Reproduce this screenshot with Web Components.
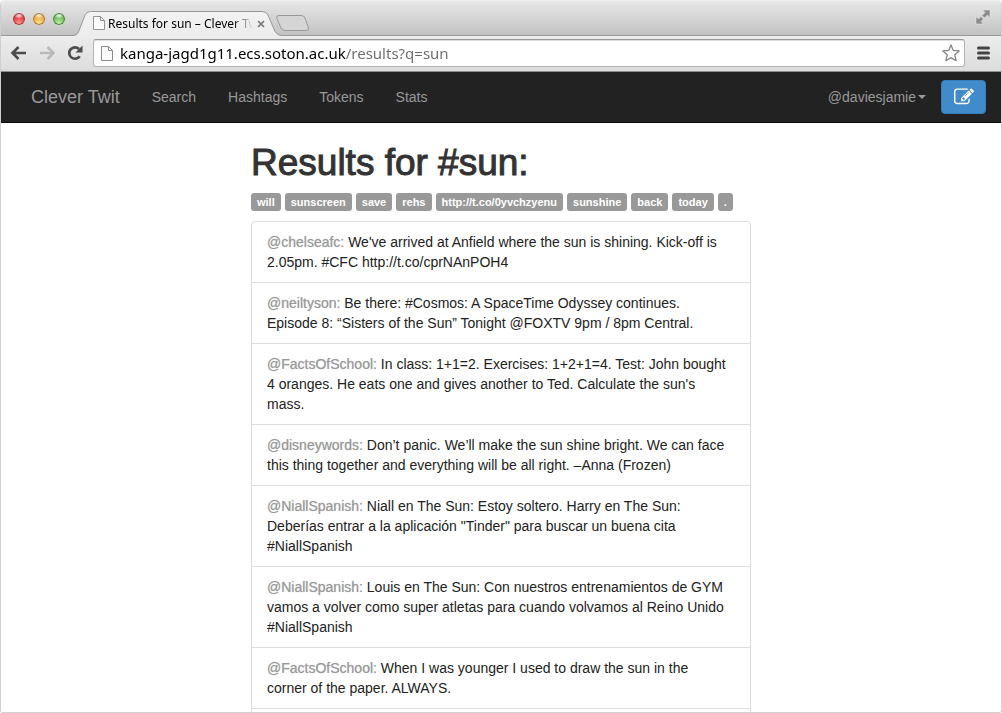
<!DOCTYPE html>
<html lang="en">
<head>
<meta charset="utf-8">
<title>Results for sun – Clever Twit</title>
<style>
  html, body { margin: 0; height: 100%; background: #fff; }
  body { font-family: "Liberation Sans", Arial, sans-serif; font-size: 14px; line-height: 20px; color: #333; }
</style>
</head>
<body>
<browser-window>
  <tab-strip slot="chrome">Results for sun – Clever Twit</tab-strip>
  <tool-bar slot="chrome" url="kanga-jagd1g11.ecs.soton.ac.uk/results?q=sun"></tool-bar>
  <nav-bar brand="Clever Twit" user="@daviesjamie">
    <nav-item>Search</nav-item>
    <nav-item>Hashtags</nav-item>
    <nav-item>Tokens</nav-item>
    <nav-item>Stats</nav-item>
  </nav-bar>
  <results-page>
    <span slot="title">Results for #sun:</span>
    <tag-label slot="tags">will</tag-label>
    <tag-label slot="tags">sunscreen</tag-label>
    <tag-label slot="tags">save</tag-label>
    <tag-label slot="tags">rehs</tag-label>
    <tag-label slot="tags">http://t.co/0yvchzyenu</tag-label>
    <tag-label slot="tags">sunshine</tag-label>
    <tag-label slot="tags">back</tag-label>
    <tag-label slot="tags">today</tag-label>
    <tag-label slot="tags">.</tag-label>
    <tweet-item><a href="#">@chelseafc:</a> We've arrived at Anfield where the sun is shining. Kick-off is 2.05pm. #CFC http://t.co/cprNAnPOH4</tweet-item>
    <tweet-item><a href="#">@neiltyson:</a> Be there: #Cosmos: A SpaceTime Odyssey continues. Episode 8: “Sisters of the Sun” Tonight @FOXTV 9pm / 8pm Central.</tweet-item>
    <tweet-item><a href="#">@FactsOfSchool:</a> In class: 1+1=2. Exercises: 1+2+1=4. Test: John bought 4 oranges. He eats one and gives another to Ted. Calculate the sun's mass.</tweet-item>
    <tweet-item><a href="#">@disneywords:</a> Don’t panic. We’ll make the sun shine bright. We can face this thing together and everything will be all right. –Anna (Frozen)</tweet-item>
    <tweet-item><a href="#">@NiallSpanish:</a> Niall en The Sun: Estoy soltero. Harry en The Sun: Deberías entrar a la aplicación "Tinder" para buscar un buena cita #NiallSpanish</tweet-item>
    <tweet-item><a href="#">@NiallSpanish:</a> Louis en The Sun: Con nuestros entrenamientos de GYM vamos a volver como super atletas para cuando volvamos al Reino Unido #NiallSpanish</tweet-item>
    <tweet-item><a href="#">@FactsOfSchool:</a> When I was younger I used to draw the sun in the corner of the paper. ALWAYS.</tweet-item>
    <tweet-item></tweet-item>
  </results-page>
</browser-window>

<script>
const define = (name, html, setup) => {
  const template = document.createElement('template');
  template.innerHTML = html;
  customElements.define(name, class extends HTMLElement {
    constructor() {
      super();
      this.attachShadow({ mode: 'open' }).append(template.content.cloneNode(true));
    }
    connectedCallback() { if (setup) setup(this, this.shadowRoot); }
  });
};

define('browser-window', `
  <style>
    :host { display: flex; flex-direction: column; box-sizing: border-box; height: 100vh; overflow: hidden;
      border: 1px solid #d0d0d0; border-top: 0; border-radius: 5px 5px 3px 3px; }
    header { flex: none; }
    main { flex: 1; min-height: 0; overflow: hidden; background: #fff; }
  </style>
  <header><slot name="chrome"></slot></header>
  <main><slot></slot></main>`);

define('tab-strip', `
  <style>
    :host { display: flex; box-sizing: border-box; height: 36px; padding: 0 10px 0 12px;
      background: linear-gradient(#f4f4f4 0, #e6e6e6 2px, #c2c2c2 35px); border-bottom: 1px solid #999;
      font-family: "Noto Sans", sans-serif; font-size: 12px; line-height: 24px; color: #000; }
    button { border: 0; padding: 0; background: none; display: block; }
    .lights { display: flex; gap: 8px; padding-top: 13px; }
    .lights button { width: 12px; height: 12px; border-radius: 50%; }
    .red { background: radial-gradient(ellipse 5px 3px at 50% 22%, #fff0f0, transparent), radial-gradient(circle at 50% 90%, #ff9c9c, #e03a40 60%); box-shadow: inset 0 0 0 1px #a8373a; }
    .amber { background: radial-gradient(ellipse 5px 3px at 50% 22%, #fffbe8, transparent), radial-gradient(circle at 50% 90%, #ffe890, #eda53c 60%); box-shadow: inset 0 0 0 1px #a87230; }
    .green { background: radial-gradient(ellipse 5px 3px at 50% 22%, #f4fff0, transparent), radial-gradient(circle at 50% 90%, #c8f4a4, #6ab958 60%); box-shadow: inset 0 0 0 1px #47803c; }
    .tab { position: relative; display: flex; align-items: center; box-sizing: border-box; width: 210px; height: 25px;
      margin: 11px 0 0 8px; padding: 0 18px 0 20px; }
    .shape { position: absolute; left: 0; top: 0; }
    .page { position: relative; flex: none; margin-right: 3px; }
    .title { position: relative; flex: 1; overflow: hidden; white-space: nowrap;
      -webkit-mask-image: linear-gradient(90deg, #000 86%, transparent); mask-image: linear-gradient(90deg, #000 86%, transparent); }
    .close { position: relative; flex: none; margin-left: 4px; }
    .new { height: 17px; margin: 15px auto 0 -7px; z-index: 1; }
    .full { margin-top: 9px; height: 16px; }
    svg { display: block; }
  </style>
  <div class="lights">
    <button class="red" aria-label="Close window"></button>
    <button class="amber" aria-label="Minimise window"></button>
    <button class="green" aria-label="Zoom window"></button>
  </div>
  <div class="tab">
    <svg class="shape" width="210" height="25" viewBox="0 0 210 25">
      <defs><linearGradient id="g" x2="0" y2="1"><stop stop-color="#f3f3f3"/><stop offset="1" stop-color="#ececec"/></linearGradient></defs>
      <path d="M0 25V24.500Q4 24.500 5.500 21L12 4Q13.500.5 17.500.5H189Q193.500.5 195 4L202 20.500Q204 24.500 209 24.500V25Z" fill="url(#g)"/>
      <path d="M0 24.500Q4 24.500 5.500 21L12 4Q13.500.5 17.500.5H189Q193.500.5 195 4L202 20.500Q204 24.500 209 24.500" fill="none" stroke="#979797"/>
    </svg>
    <svg class="page" width="12" height="15"><path d="M.5.5H7.500L11.500 4.500V13.500H.5ZM7.500.5V4.500H11.500" fill="#fbfbfb" stroke="#959595"/></svg>
    <span class="title"><slot></slot></span>
    <button class="close" aria-label="Close tab"><svg width="8" height="8"><path d="M1 1L7 7M7 1L1 7" stroke="#757575" stroke-width="1.700"/></svg></button>
  </div>
  <button class="new" aria-label="New tab"><svg width="34" height="17"><path d="M3 .5H25Q28 .5 29 3L32.500 13Q33 15.500 30 15.500H9Q6 15.500 5 13L.8 3Q0 .5 3 .5Z" fill="#d5d5d5" stroke="#989898"/></svg></button>
  <button class="full" aria-label="Full screen"><svg width="16" height="16"><path d="M7.500 1H15V8.500L12.500 6L9.500 9L7 6.500L10 3.500ZM1 7.500L3.500 10L6 7.500L8.500 10L6 12.500L8.500 15H1Z" fill="#8b8b8b" stroke="#e8e8e8" stroke-width=".6"/></svg></button>`);

define('tool-bar', `
  <style>
    :host { display: flex; align-items: center; box-sizing: border-box; height: 36px; padding: 0 11px 1px 9px;
      background: linear-gradient(#ededed, #dcdcdc); border-bottom: 1px solid #8d9090; }
    button { border: 0; padding: 0; background: none; display: block; }
    svg { display: block; }
    .back { margin-right: 12px; }
    .next { margin-right: 11px; }
    .reload { margin-right: 10px; }
    .bar { flex: 1; display: flex; align-items: center; box-sizing: border-box; height: 28px; padding: 0 4px 0 7px;
      background: #fff; border: 1px solid #b4b4b4; border-top-color: #989898; border-radius: 3px; box-shadow: inset 0 1px 1px #ddd; }
    input { flex: 1; min-width: 0; margin: 0 0 0 7px; padding: 0; border: 0; outline: 0; height: 24px;
      font: 15px/24px "Noto Sans", sans-serif; color: #000; -webkit-text-fill-color: transparent;
      background: linear-gradient(90deg, #000 var(--host-width), #6b6b6b var(--host-width)); -webkit-background-clip: text; background-clip: text; }
    .menu { margin-left: 12px; }
  </style>
  <button class="back" aria-label="Back"><svg width="17" height="16"><path d="M8.500 2L2.500 8L8.500 14M3 8H16" fill="none" stroke="#4d4d4d" stroke-width="2.600"/></svg></button>
  <button class="next" aria-label="Forward"><svg width="17" height="16"><path d="M8.500 2L14.500 8L8.500 14M14 8H1" fill="none" stroke="#b9b9b9" stroke-width="2.600"/></svg></button>
  <button class="reload" aria-label="Reload"><svg width="16" height="16"><path d="M12.700 11.200A5.700 5.700 0 1 1 12 4" fill="none" stroke="#4d4d4d" stroke-width="2.700"/><path d="M15.500 .5V7.500H8.500Z" fill="#4d4d4d"/></svg></button>
  <div class="bar">
    <svg width="12" height="16"><path d="M.5 1.500H7.500L11.500 5.500V15.500H.5ZM7.500 1.500V5.500H11.500" fill="#fafafa" stroke="#8c8c8c"/></svg>
    <input type="text" aria-label="Address" spellcheck="false">
    <button aria-label="Bookmark this page"><svg width="18" height="18" viewBox="0 0 18 18"><path d="M9 .9L11.300 6.400L17.200 6.900L12.800 10.800L14.100 16.700L9 13.600L3.900 16.700L5.200 10.800L.8 6.900L6.700 6.400Z" fill="#fff" stroke="#858585" stroke-width="1.300" stroke-linejoin="round"/></svg></button>
  </div>
  <button class="menu" aria-label="Menu"><svg width="13" height="14"><path d="M1.500 2H11.500M1.500 7H11.500M1.500 12H11.500" stroke="#444" stroke-width="3" stroke-linecap="round"/></svg></button>`,
  (el, root) => {
    const input = root.querySelector('input');
    const url = el.getAttribute('url');
    input.value = url;
    const pen = document.createElement('canvas').getContext('2d');
    pen.font = '15px "Noto Sans", sans-serif';
    input.style.setProperty('--host-width', Math.round(pen.measureText(url.split('/')[0]).width) + 'px');
  });

define('nav-bar', `
  <style>
    :host { display: block; }
    nav { display: flex; align-items: center; gap: 2px; height: 50px; padding: 0 15px; background: #222; border-bottom: 1px solid #080808; color: #999; }
    a { color: inherit; text-decoration: none; }
    .brand { padding: 0 15px; font-size: 18px; }
    .links { display: flex; gap: 2px; margin-right: auto; }
    .user { display: flex; align-items: center; gap: 2px; padding: 0; margin-right: 13px; border: 0; background: none; font: inherit; color: inherit; }
    .caret { border: 4px solid transparent; border-top-color: #999; border-bottom: 0; }
    .compose { display: flex; align-items: center; justify-content: center; width: 45px; height: 34px; padding: 0;
      border: 1px solid #357ebd; border-radius: 4px; background: #428bca; }
  </style>
  <nav>
    <a class="brand" href="#"></a>
    <div class="links"><slot></slot></div>
    <button class="user"><span></span><i class="caret"></i></button>
    <button class="compose" aria-label="Compose"><svg width="20" height="20" viewBox="0 0 1792 1792"><path fill="#fff" d="M888 1184l116-116-152-152-116 116v56h96v96h56zm440-720q-16-16-33 1l-350 350q-17 17-1 33t33-1l350-350q17-17 1-33zm80 594v190q0 119-84.500 203.500t-203.500 84.500h-832q-119 0-203.500-84.500t-84.500-203.500v-832q0-119 84.500-203.500t203.500-84.500h832q63 0 117 25 15 7 18 23 3 17-9 29l-49 49q-14 14-32 8-23-6-45-6h-832q-66 0-113 47t-47 113v832q0 66 47 113t113 47h832q66 0 113-47t47-113v-126q0-13 9-22l64-64q15-15 35-7t20 29zm-96-738l288 288-672 672h-288v-288zm444 132l-92 92-288-288 92-92q28-28 68-28t68 28l152 152q28 28 28 68t-28 68z"/></svg></button>
  </nav>`,
  (el, root) => {
    root.querySelector('.brand').textContent = el.getAttribute('brand');
    root.querySelector('.user span').textContent = el.getAttribute('user');
  });

define('nav-item', `
  <style>
    :host { display: block; }
    a { display: block; padding: 15px; color: inherit; text-decoration: none; }
  </style>
  <a href="#"><slot></slot></a>`);

define('results-page', `
  <style>
    :host { display: block; max-width: 500px; margin: 0 auto; padding-top: 20px; }
    h1 { margin: 0 0 10px; font-size: 37px; line-height: 40px; font-weight: 400; -webkit-text-stroke: 1px #333; color: #333; }
    .tags { display: flex; gap: 4px; margin-bottom: 10px; }
    .list { display: flex; flex-direction: column; border: 1px solid #ddd; border-radius: 4px; }
  </style>
  <h1><slot name="title"></slot></h1>
  <div class="tags"><slot name="tags"></slot></div>
  <div class="list" role="list"><slot></slot></div>`);

define('tag-label', `
  <style>
    :host { display: block; padding: 0 6px; border-radius: 3px; background: #999; color: #fff;
      font-size: 11px; line-height: 18px; font-weight: 700; white-space: nowrap; }
  </style>
  <slot></slot>`);

define('tweet-item', `
  <style>
    :host { display: block; padding: 10px 20px 10px 15px; border-bottom: 1px solid #ddd; min-height: 20px; color: #222; }
    :host(:last-child) { border-bottom: 0; }
    ::slotted(a) { color: #999; text-decoration: none; text-shadow: 0 0 1px #bbb; }
  </style>
  <slot></slot>`,
  el => el.setAttribute('role', 'listitem'));
</script>
</body>
</html>
